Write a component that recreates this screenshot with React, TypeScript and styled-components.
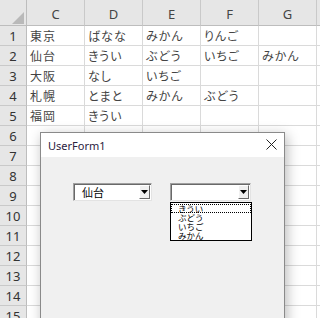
import React from 'react';
import styled, { createGlobalStyle } from 'styled-components';

const GlobalStyle = createGlobalStyle`
  html, body {
    margin: 0;
    padding: 0;
    overflow: hidden;
    background: #ffffff;
  }
  body {
    font-family: "Noto Sans CJK JP", "Noto Sans", sans-serif;
  }
`

const columns = ['C', 'D', 'E', 'F', 'G'];

const data: string[][] = [
  ['東京', 'ばなな', 'みかん', 'りんご', ''],
  ['仙台', 'きうい', 'ぶどう', 'いちご', 'みかん'],
  ['大阪', 'なし', 'いちご', '', ''],
  ['札幌', 'とまと', 'みかん', 'ぶどう', ''],
  ['福岡', 'きうい', '', '', ''],
];

const ROW_COUNT = 15;

const listItems = ['きうい', 'ぶどう', 'いちご', 'みかん'];

const App: React.FC = () => {
  const rows = Array.from({ length: ROW_COUNT }, (_, i) => data[i] || ['', '', '', '', '']);

  return (
    <Screen>
      <GlobalStyle />
      <Sheet>
        <Corner>
          <svg width="27" height="26" viewBox="0 0 27 26">
            <polygon points="12,24 24,24 24,12" fill="#b9b9b9" />
          </svg>
        </Corner>
        {columns.map(c => (
          <ColHeader key={c}>{c}</ColHeader>
        ))}
        <ColHeader />
        {rows.map((row, r) => (
          <React.Fragment key={r}>
            <RowHeader>{r + 1}</RowHeader>
            {row.map((v, c) => (
              <Cell key={c}>{v}</Cell>
            ))}
            <Cell />
          </React.Fragment>
        ))}
      </Sheet>

      <Window>
        <TitleBar>
          <Title>UserForm1</Title>
          <CloseButton>
            <svg width="11" height="11" viewBox="0 0 11 11">
              <path d="M0.5 0.5 L10.5 10.5 M10.5 0.5 L0.5 10.5" stroke="#222" strokeWidth="1" />
            </svg>
          </CloseButton>
        </TitleBar>
        <FormBody>
          <Combo width={79}>
            <ComboText>仙台</ComboText>
            <DropButton>
              <svg width="7" height="4" viewBox="0 0 7 4">
                <polygon points="0,0 7,0 3.5,4" fill="#000" />
              </svg>
            </DropButton>
          </Combo>
          <ComboWrap>
            <Combo width={81}>
              <ComboText />
              <DropButton>
                <svg width="7" height="4" viewBox="0 0 7 4">
                  <polygon points="0,0 7,0 3.5,4" fill="#000" />
                </svg>
              </DropButton>
            </Combo>
            <ListBox>
              {listItems.map((item, i) => (
                <ListItem key={item} focused={i === 0}>{item}</ListItem>
              ))}
            </ListBox>
          </ComboWrap>
        </FormBody>
      </Window>
    </Screen>
  )
}

const Screen = styled.div`
  position: relative;
  width: 320px;
  height: 318px;
  overflow: hidden;
  background: #ffffff;
`

const Sheet = styled.div`
  display: grid;
  grid-template-columns: 27px repeat(5, 58px) 1fr;
  grid-template-rows: 26px repeat(${ROW_COUNT}, 20px);
`

const Corner = styled.div`
  background: #e6e6e6;
  border-right: 1px solid #bdbdbd;
  border-bottom: 1px solid #bdbdbd;
  box-sizing: border-box;
  svg { display: block; }
`

const ColHeader = styled.div`
  background: #e6e6e6;
  border-right: 1px solid #c9c9c9;
  border-bottom: 1px solid #bdbdbd;
  box-sizing: border-box;
  display: flex;
  align-items: center;
  justify-content: center;
  font-family: "Noto Sans", "Liberation Sans", sans-serif;
  font-size: 13px;
  color: #444;
  padding-top: 2px;
`

const RowHeader = styled.div`
  background: #e6e6e6;
  border-right: 1px solid #bdbdbd;
  border-bottom: 1px solid #c9c9c9;
  box-sizing: border-box;
  display: flex;
  align-items: center;
  justify-content: center;
  font-family: "Noto Sans", "Liberation Sans", sans-serif;
  font-size: 13px;
  color: #333;
`

const Cell = styled.div`
  border-right: 1px solid #dadada;
  border-bottom: 1px solid #dadada;
  box-sizing: border-box;
  display: flex;
  align-items: center;
  padding-left: 3px;
  font-family: "Noto Sans CJK JP", sans-serif;
  font-feature-settings: "palt";
  font-size: 12px;
  letter-spacing: 1px;
  color: #444;
  white-space: nowrap;
  overflow: hidden;
`

const Window = styled.div`
  position: absolute;
  left: 40px;
  top: 132px;
  width: 245px;
  height: 200px;
  box-sizing: border-box;
  border: 1px solid #8a8a8a;
  background: #f0f0f0;
  box-shadow: 2px 3px 12px rgba(0, 0, 0, 0.28);
  display: flex;
  flex-direction: column;
`

const TitleBar = styled.div`
  height: 24px;
  background: #ffffff;
  display: flex;
  align-items: center;
  justify-content: space-between;
  padding: 0 7px;
  flex-shrink: 0;
`

const Title = styled.div`
  font-family: "Noto Sans", "Liberation Sans", sans-serif;
  font-size: 11px;
  color: #2b2240;
  padding-top: 1px;
`

const CloseButton = styled.div`
  display: flex;
  align-items: center;
  margin-top: -1px;
  svg { display: block; }
`

const FormBody = styled.div`
  display: flex;
  align-items: flex-start;
  gap: 18px;
  padding: 26px 0 0 32px;
`

const ComboWrap = styled.div`
  position: relative;
`

const Combo = styled.div<{ width: number }>`
  width: ${p => p.width}px;
  height: 18px;
  box-sizing: border-box;
  background: #ffffff;
  border-top: 1px solid #a0a0a0;
  border-left: 1px solid #a0a0a0;
  border-right: 1px solid #e3e3e3;
  border-bottom: 1px solid #e3e3e3;
  box-shadow: inset 1px 1px 0 #696969;
  display: flex;
  align-items: center;
  justify-content: space-between;
  padding: 1px 1px 1px 8px;
`

const ComboText = styled.div`
  font-family: "Noto Sans CJK JP", sans-serif;
  font-size: 11px;
  color: #000;
  line-height: 14px;
`

const DropButton = styled.div`
  width: 11px;
  height: 14px;
  box-sizing: border-box;
  background: #f0f0f0;
  border-top: 1px solid #ffffff;
  border-left: 1px solid #ffffff;
  border-right: 1px solid #696969;
  border-bottom: 1px solid #696969;
  display: flex;
  align-items: center;
  justify-content: center;
  svg { display: block; }
`

const ListBox = styled.div`
  position: absolute;
  left: 0;
  top: 19px;
  width: 82px;
  height: 39px;
  box-sizing: border-box;
  border: 1px solid #000;
  background: #ffffff;
  padding-top: 0.5px;
  overflow: hidden;
`

const ListItem = styled.div<{ focused: boolean }>`
  height: 9.25px;
  outline: ${p => (p.focused ? '1px dotted #000' : 'none')};
  outline-offset: -1px;
  padding-left: 7px;
  font-family: "Noto Sans CJK JP", sans-serif;
  font-size: 8.5px;
  line-height: 9.25px;
  color: #000;
  white-space: nowrap;
`

export default App
